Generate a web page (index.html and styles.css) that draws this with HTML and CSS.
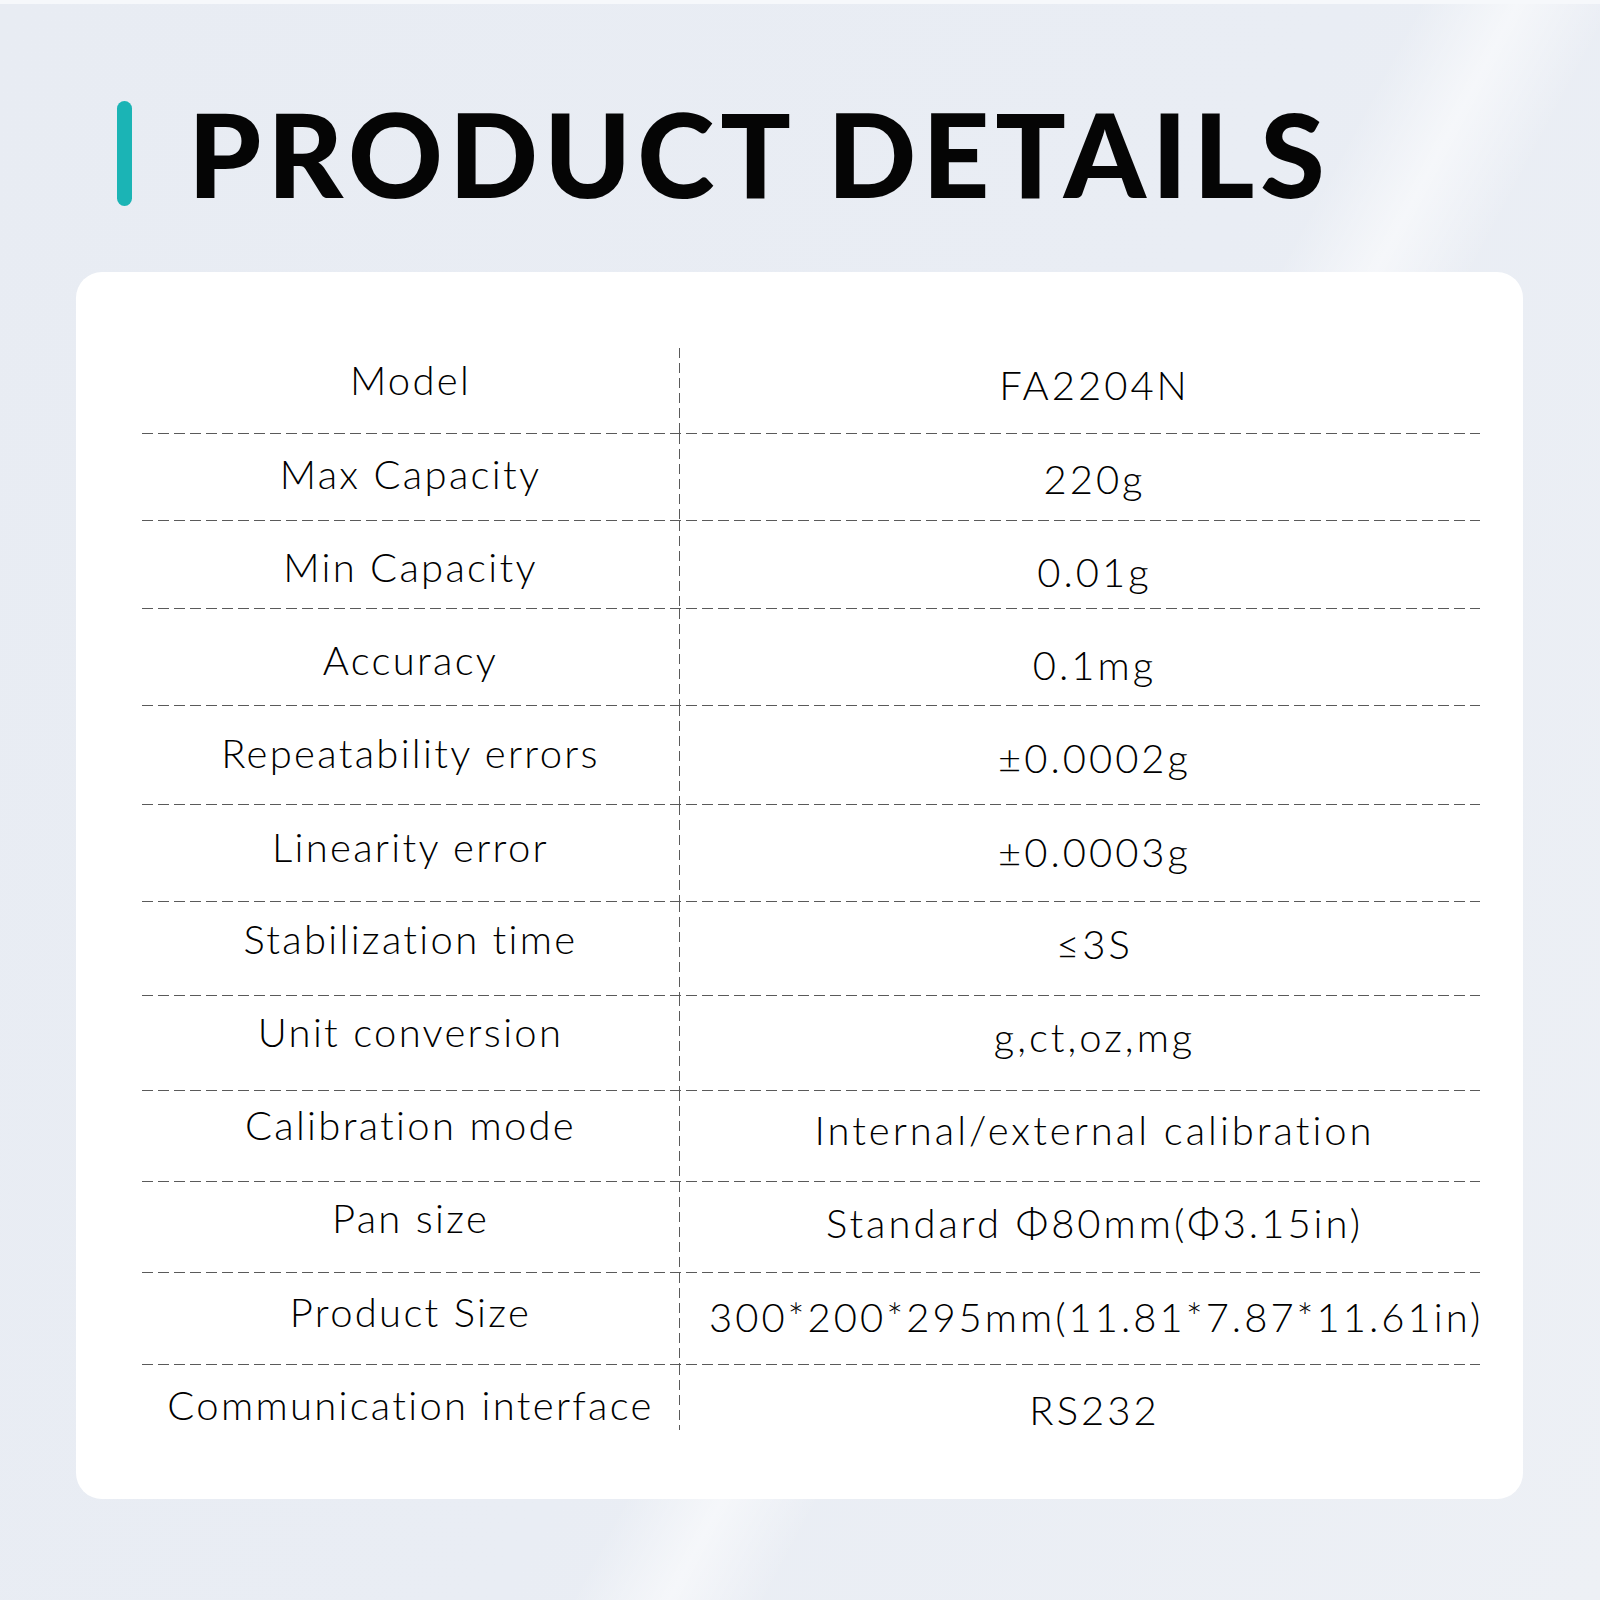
FILE: index.html
```html
<!DOCTYPE html>
<html lang="en">
<head>
<meta charset="utf-8">
<title>Product Details</title>
<link rel="stylesheet" href="styles.css">
</head>
<body>
<div class="page">
  <header class="heading">
    <span class="accent"></span>
    <h1 class="title">PRODUCT DETAILS</h1>
  </header>
  <section class="card">
    <div class="specs">
      <div class="row"><div class="label">Model</div><div class="value">FA2204N</div></div>
      <div class="row"><div class="label">Max Capacity</div><div class="value">220g</div></div>
      <div class="row"><div class="label">Min Capacity</div><div class="value">0.01g</div></div>
      <div class="row"><div class="label">Accuracy</div><div class="value">0.1mg</div></div>
      <div class="row"><div class="label">Repeatability errors</div><div class="value">±0.0002g</div></div>
      <div class="row"><div class="label">Linearity error</div><div class="value">±0.0003g</div></div>
      <div class="row"><div class="label">Stabilization time</div><div class="value">≤3S</div></div>
      <div class="row"><div class="label">Unit conversion</div><div class="value">g,ct,oz,mg</div></div>
      <div class="row"><div class="label">Calibration mode</div><div class="value">Internal/external calibration</div></div>
      <div class="row"><div class="label">Pan size</div><div class="value">Standard Φ80mm(Φ3.15in)</div></div>
      <div class="row"><div class="label">Product Size</div><div class="value">300*200*295mm(11.81*7.87*11.61in)</div></div>
      <div class="row"><div class="label">Communication interface</div><div class="value">RS232</div></div>
    </div>
  </section>
</div>
</body>
</html>
```
FILE: styles.css
```css
html, body {
  margin: 0;
  padding: 0;
}

body {
  width: 1600px;
  height: 1600px;
  overflow: hidden;
  background:
    linear-gradient(180deg, #f6f8fb 0, #f6f8fb 4px, transparent 4px),
    linear-gradient(118deg, transparent 0%, transparent 58%, rgba(255,255,255,0.55) 62%, transparent 66%, transparent 100%),
    linear-gradient(118deg, #e8ecf3 0%, #e9edf4 55%, #edf0f5 100%);
  font-family: "Lato", "Liberation Sans", sans-serif;
  color: #111;
}

.page {
  display: flex;
  flex-direction: column;
  padding-top: 101px;
}

.heading {
  display: flex;
  align-items: center;
  padding-left: 117px;
  height: 105px;
}

.accent {
  width: 15px;
  height: 105px;
  border-radius: 8px;
  background: #1bb4b5;
  flex: none;
}

.title {
  margin: 0 0 0 56px;
  font-family: "Lato", "Liberation Sans", sans-serif;
  font-weight: 900;
  font-size: 117px;
  line-height: 1;
  letter-spacing: 6px;
  color: #050505;
}

.card {
  margin-top: 66px;
  margin-left: 76px;
  width: 1447px;
  height: 1227px;
  border-radius: 26px;
  background: #ffffff;
  box-sizing: border-box;
  padding: 76px 0 0 66px;
}

.specs {
  width: 1338px;
  display: flex;
  flex-direction: column;
}

.row {
  display: grid;
  grid-template-columns: 537px 801px;
  height: var(--h);
  background:
    repeating-linear-gradient(to right, #5a5a5a 0, #5a5a5a 11px, transparent 11px, transparent 16px) left bottom / 100% 1px no-repeat;
}

.row:last-child {
  background: none;
}

.row:nth-child(1)  { --h: 86px; --t: 12px; }
.row:nth-child(2)  { --h: 87px; --t: 20px; }
.row:nth-child(3)  { --h: 88px; --t: 26px; }
.row:nth-child(4)  { --h: 97px; --t: 31px; }
.row:nth-child(5)  { --h: 99px; --t: 27px; }
.row:nth-child(6)  { --h: 97px; --t: 22px; }
.row:nth-child(7)  { --h: 94px; --t: 17px; }
.row:nth-child(8)  { --h: 95px; --t: 16px; }
.row:nth-child(9)  { --h: 91px; --t: 14px; }
.row:nth-child(10) { --h: 91px; --t: 16px; }
.row:nth-child(11) { --h: 92px; --t: 19px; }
.row:nth-child(12) { --h: 60px; --t: 20px; }

.label,
.value {
  font-size: 40px;
  font-weight: 300;
  line-height: 40px;
  text-align: center;
  white-space: nowrap;
  color: #000;
}

.label {
  padding-top: var(--t);
  letter-spacing: 2.3px;
}

.value {
  padding-top: calc(var(--t) + 5px);
  padding-left: 30px;
  letter-spacing: 3px;
  background:
    repeating-linear-gradient(to bottom, #5a5a5a 0, #5a5a5a 10px, transparent 10px, transparent 15px) left top / 1px 100% no-repeat;
}
```
